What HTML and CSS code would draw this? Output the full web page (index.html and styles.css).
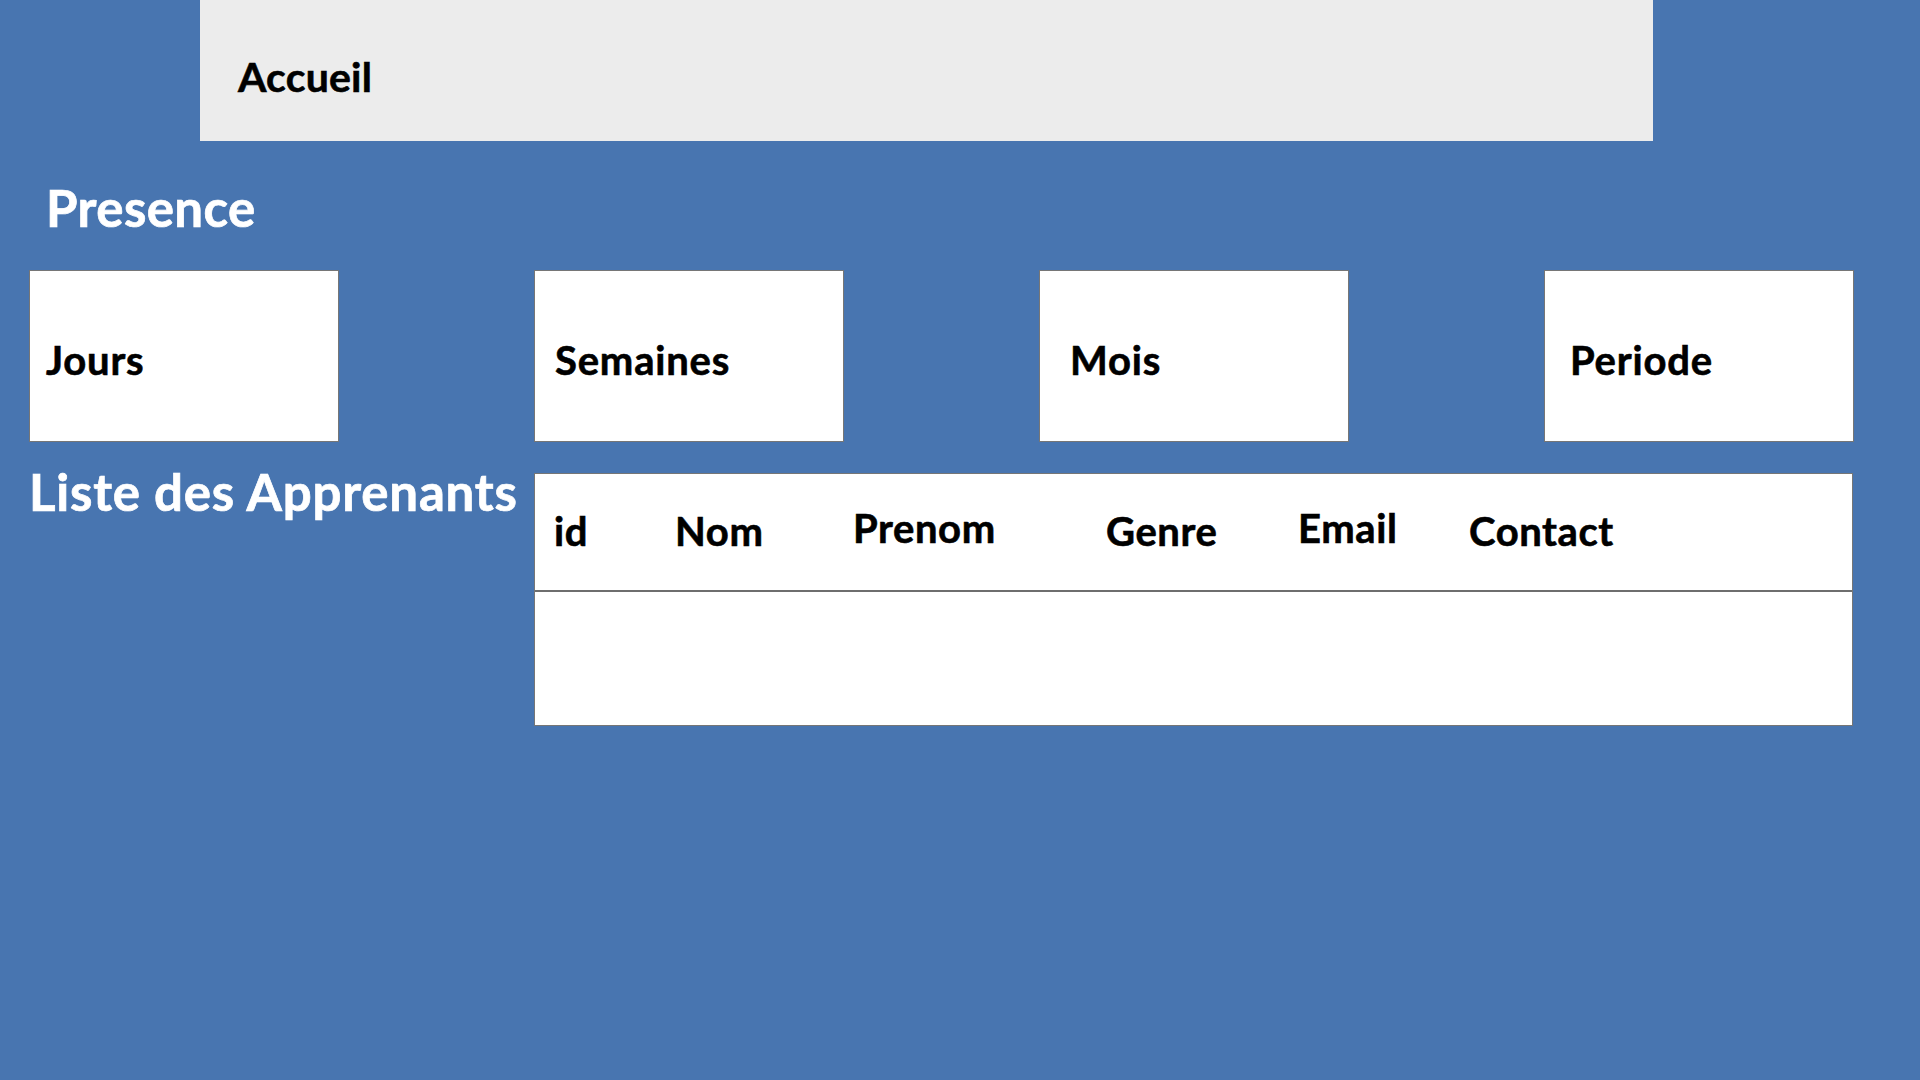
FILE: index.html
```html
<!DOCTYPE html>
<html lang="fr">
<head>
<meta charset="utf-8">
<title>Accueil</title>
<link rel="stylesheet" href="styles.css">
</head>
<body>
  <header class="topbar">
    <span class="topbar-title">Accueil</span>
  </header>

  <h1 class="section-title presence-title">Presence</h1>

  <div class="cards">
    <div class="card card-jours"><span class="card-label">Jours</span></div>
    <div class="card card-semaines"><span class="card-label">Semaines</span></div>
    <div class="card card-mois"><span class="card-label">Mois</span></div>
    <div class="card card-periode"><span class="card-label">Periode</span></div>
  </div>

  <section class="list">
    <h2 class="section-title list-title">Liste des Apprenants</h2>
    <div class="table">
      <div class="table-head">
        <div class="col col-id">id</div>
        <div class="col col-nom">Nom</div>
        <div class="col col-prenom raised">Prenom</div>
        <div class="col col-genre">Genre</div>
        <div class="col col-email raised">Email</div>
        <div class="col col-contact">Contact</div>
      </div>
      <div class="table-body"></div>
    </div>
  </section>
</body>
</html>
```

FILE: styles.css
```css
* {
  box-sizing: border-box;
}

html, body {
  margin: 0;
  padding: 0;
}

body {
  width: 1920px;
  height: 1080px;
  background: #4875b0;
  font-family: Lato, "Open Sans", sans-serif;
  font-weight: 700;
  overflow: hidden;
}

.topbar {
  margin-left: 200px;
  width: 1453px;
  height: 141px;
  background: #ececec;
  padding-top: 52px;
  padding-left: 38px;
}

.topbar-title {
  display: block;
  font-size: 41px;
  line-height: 1.2;
  color: #000;
  letter-spacing: 0.2px;
  -webkit-text-stroke: 0.6px #000;
}

.section-title {
  margin: 0;
  color: #fff;
  font-size: 51px;
  font-weight: 700;
  line-height: 1.2;
  letter-spacing: 0.4px;
  -webkit-text-stroke: 0.7px #fff;
}

.presence-title {
  margin-top: 36px;
  padding-left: 46px;
}

.cards {
  display: flex;
  gap: 195px;
  margin-top: 32px;
  padding-left: 29px;
}

.card {
  width: 310px;
  height: 172px;
  background: #fff;
  border: 1px solid #767676;
  display: flex;
  align-items: center;
  padding-top: 7px;
}

.card-label {
  font-size: 40px;
  line-height: 1.2;
  color: #000;
  letter-spacing: 0.8px;
  -webkit-text-stroke: 0.6px #000;
}

.card-jours { padding-left: 16px; }
.card-semaines { padding-left: 20px; }
.card-mois { padding-left: 30px; }
.card-periode { padding-left: 25px; }

.list {
  display: flex;
  align-items: flex-start;
  margin-top: 19px;
  padding-left: 29px;
}

.list-title {
  width: 505px;
  flex: none;
  white-space: nowrap;
  letter-spacing: 0.8px;
}

.table {
  margin-top: 12px;
  width: 1319px;
  height: 253px;
  background: #fff;
  border: 1px solid #767676;
  display: flex;
  flex-direction: column;
}

.table-head {
  height: 118px;
  border-bottom: 2px solid #6e6e6e;
  display: flex;
  align-items: flex-start;
  padding-top: 33px;
  padding-left: 19px;
}

.col {
  font-size: 40px;
  line-height: 1.2;
  color: #000;
  flex: none;
  letter-spacing: 0.6px;
  -webkit-text-stroke: 0.6px #000;
}

.col.raised {
  margin-top: -3px;
}

.col-id { width: 121px; }
.col-nom { width: 178px; }
.col-prenom { width: 253px; }
.col-genre { width: 192px; }
.col-email { width: 171px; }
.col-contact { width: 300px; }

.table-body {
  flex: 1;
}
```
